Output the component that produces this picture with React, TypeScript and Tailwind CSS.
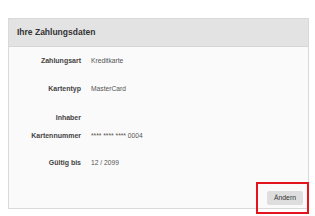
export default function App() {
  const rows: { label: string; value: string; mt: string }[] = [
    { label: 'Zahlungsart', value: 'Kreditkarte', mt: 'mt-[7px]' },
    { label: 'Kartentyp', value: 'MasterCard', mt: 'mt-[14px]' },
    { label: 'Inhaber', value: '', mt: 'mt-[15px]' },
    { label: 'Kartennummer', value: '**** **** **** 0004', mt: 'mt-[4px]' },
    { label: 'Gültig bis', value: '12 / 2099', mt: 'mt-[13px]' },
  ]

  return (
    <div className="relative w-[315px] h-[216px] bg-white pt-[18px] pl-[8px] font-['Liberation_Sans',Arial,sans-serif]">
      <div className="w-[301px] h-[191px] border border-[#d9d9d9] bg-[#fafafa] flex flex-col">
        <div className="h-[28px] shrink-0 bg-[#e3e3e3] border-b border-[#d6d6d6] flex items-center pl-[8px]">
          <h2 className="text-[8.5px] font-bold text-[#333]">Ihre Zahlungsdaten</h2>
        </div>

        <div className="flex flex-col">
          {rows.map((r) => (
            <div key={r.label} className={`flex items-center h-[14px] ${r.mt}`}>
              <div className="w-[72px] text-right text-[7px] font-bold text-[#444]">{r.label}</div>
              <div className="pl-[10px] text-[6.7px] text-[#555]">{r.value}</div>
            </div>
          ))}
        </div>

        <div className="mt-auto flex justify-end pr-[5px] pb-[3px]">
          <button className="h-[14px] w-[36px] rounded-[2px] bg-[#dedede] text-[6.8px] text-[#333] flex items-center justify-center">
            Ändern
          </button>
        </div>
      </div>

      <div className="absolute left-[256px] top-[182px] w-[53px] h-[32px] border-2 border-[#e3141b]"></div>
    </div>
  )
}
